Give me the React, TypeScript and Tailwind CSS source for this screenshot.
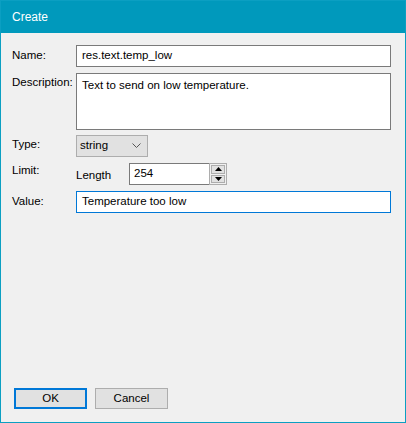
import React from "react"

const font = { fontFamily: '"Liberation Sans", "Noto Sans", sans-serif' }

function Label({ children, className = "" }: { children: React.ReactNode; className?: string }) {
  return <div className={"w-[64px] shrink-0 whitespace-nowrap text-black " + className}>{children}</div>
}

export default function App() {
  return (
    <div
      className="flex h-[423px] w-[406px] flex-col border border-[#0b9fc2] bg-[#f0f0f0] text-[11.5px] text-black"
      style={font}
    >
      {/* Title bar */}
      <div className="flex h-[32px] shrink-0 items-center bg-[#0099bc] pl-[11px] text-[12px] text-white">
        Create
      </div>

      {/* Form */}
      <div className="flex flex-1 flex-col pl-[11px] pr-[14px] pt-[12px]">
        <div className="flex h-[22px] items-center">
          <Label>Name:</Label>
          <div className="flex h-[22px] flex-1 items-center border border-[#7a7a7a] bg-white pl-[5px]">
            res.text.temp_low
          </div>
        </div>

        <div className="mt-[6px] flex">
          <Label className="pt-[1px]">Description:</Label>
          <div className="h-[57px] flex-1 border border-[#7a7a7a] bg-white pl-[5px] pt-[3px]">
            Text to send on low temperature.
          </div>
        </div>

        <div className="mt-[5px] flex items-start">
          <Label className="pt-[1px]">Type:</Label>
          <div className="flex h-[22px] w-[72px] items-center justify-between border border-[#adadad] bg-[#e1e1e1] pl-[3px] pr-[6px]">
            <span>string</span>
            <svg width="9" height="6" viewBox="0 0 9 6" fill="none">
              <path d="M0.5 0.5 L4.5 4.5 L8.5 0.5" stroke="#555" strokeWidth="1" />
            </svg>
          </div>
        </div>

        <div className="mt-[6px] flex items-start">
          <Label className="-mt-[1px]">Limit:</Label>
          <div className="flex items-center">
            <span className="w-[53px] pt-[3px]">Length</span>
            <div className="flex h-[22px] w-[80px] items-center border border-[#7a7a7a] border-r-0 bg-white pl-[4px]">
              254
            </div>
            <div className="flex h-[22px] w-[18px] flex-col gap-[1px] border border-[#adadad] bg-[#f0f0f0] p-[1px]">
              <div className="flex flex-1 items-center justify-center border border-[#adadad] bg-[#e1e1e1]">
                <svg width="7" height="4" viewBox="0 0 7 4">
                  <path d="M3.5 0 L7 4 L0 4 Z" fill="#000" />
                </svg>
              </div>
              <div className="flex flex-1 items-center justify-center border border-[#adadad] bg-[#e1e1e1]">
                <svg width="7" height="4" viewBox="0 0 7 4">
                  <path d="M0 0 L7 0 L3.5 4 Z" fill="#000" />
                </svg>
              </div>
            </div>
          </div>
        </div>

        <div className="mt-[6px] flex h-[22px] items-center">
          <Label>Value:</Label>
          <div className="flex h-[22px] flex-1 items-center border border-[#0078d7] bg-white pl-[5px]">
            Temperature too low
          </div>
        </div>

        <div className="flex-1" />

        <div className="mb-[13px] flex gap-[8px] pl-[2px]">
          <button className="flex h-[21px] w-[73px] items-center justify-center border-2 border-[#0078d7] bg-[#e1e1e1]">
            OK
          </button>
          <button className="flex h-[21px] w-[73px] items-center justify-center border border-[#adadad] bg-[#e1e1e1]">
            Cancel
          </button>
        </div>
      </div>
    </div>
  )
}
